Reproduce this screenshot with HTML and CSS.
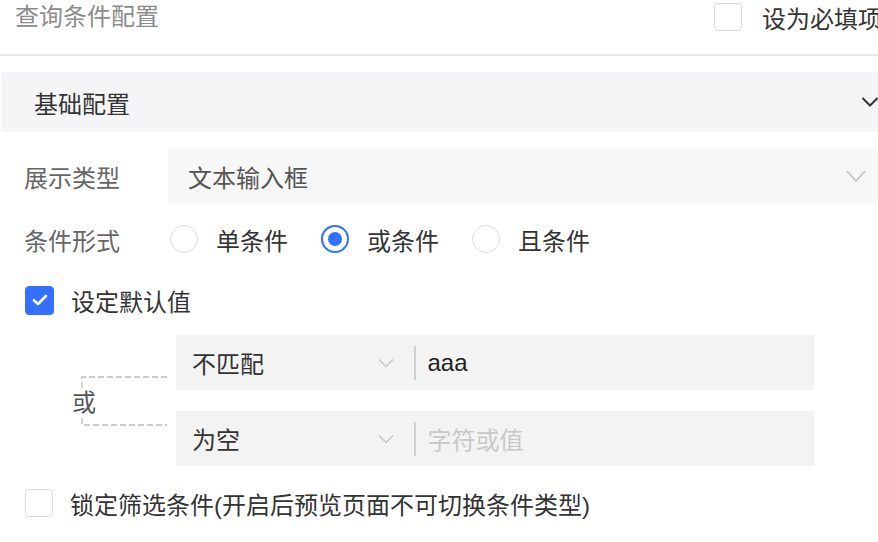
FILE: index.html
```html
<!DOCTYPE html>
<html lang="zh">
<head>
<meta charset="utf-8">
<link rel="stylesheet" href="styles.css">
</head>
<body>
<div class="page">
  <div class="top">
    <div class="top-title">查询条件配置</div>
    <label class="top-check"><span class="box"></span><span class="top-check-text">设为必填项</span></label>
  </div>

  <div class="section-head">
    <span>基础配置</span>
    <svg class="section-chev" width="18" height="12" viewBox="0 0 18 12"><path d="M1.5 2 L9 9.5 L16.5 2" fill="none" stroke="#333" stroke-width="2"/></svg>
  </div>

  <div class="row">
    <div class="label">展示类型</div>
    <div class="select">
      <span>文本输入框</span>
      <svg width="20" height="14" viewBox="0 0 20 14"><path d="M1 2 L10 12 L19 2" fill="none" stroke="#bdbdbd" stroke-width="1.5"/></svg>
    </div>
  </div>

  <div class="row radio-row">
    <div class="label">条件形式</div>
    <div class="radios">
      <label class="radio"><span class="circle"></span>单条件</label>
      <label class="radio on"><span class="circle"></span>或条件</label>
      <label class="radio"><span class="circle"></span>且条件</label>
    </div>
  </div>

  <label class="check-row">
    <span class="box checked"><svg width="16" height="12" viewBox="0 0 16 12"><path d="M2 6.2 L6 10 L14 2" fill="none" stroke="#fff" stroke-width="2.6" stroke-linecap="round" stroke-linejoin="round"/></svg></span>
    <span>设定默认值</span>
  </label>

  <div class="group">
    <div class="bracket-col">
      <div class="bracket">
        <svg width="86" height="50" viewBox="0 0 86 50"><path d="M86 1 H1 V49 H86" fill="none" stroke="#bdbdbd" stroke-width="1.3" stroke-dasharray="6 3"/></svg>
        <span class="or">或</span>
      </div>
    </div>
    <div class="cond-rows">
      <div class="cond">
        <div class="cond-op"><span>不匹配</span><svg width="16" height="10" viewBox="0 0 16 10"><path d="M1 1.5 L8 8.5 L15 1.5" fill="none" stroke="#c4c4c4" stroke-width="1.3"/></svg></div>
        <div class="cond-sep"></div>
        <div class="cond-val">aaa</div>
      </div>
      <div class="cond">
        <div class="cond-op"><span>为空</span><svg width="16" height="10" viewBox="0 0 16 10"><path d="M1 1.5 L8 8.5 L15 1.5" fill="none" stroke="#c4c4c4" stroke-width="1.3"/></svg></div>
        <div class="cond-sep"></div>
        <div class="cond-val placeholder">字符或值</div>
      </div>
    </div>
  </div>

  <label class="check-row last">
    <span class="box"></span>
    <span>锁定筛选条件(开启后预览页面不可切换条件类型)</span>
  </label>
</div>
</body>
</html>
```

FILE: styles.css
```css
* { box-sizing: border-box; }
html, body { margin: 0; padding: 0; background: #fff; }
body {
  font-family: "Liberation Sans", "Noto Sans CJK SC", sans-serif;
  font-size: 24px;
  color: #333;
  overflow: hidden;
  width: 878px;
  height: 542px;
}
.page { width: 878px; }

.top {
  display: flex;
  align-items: center;
  height: 56px;
  padding-bottom: 20px;
  border-bottom: 2px solid #e9e9e9;
  white-space: nowrap;
  overflow: hidden;
}
.top-title { padding-left: 15px; color: #8c8c8c; line-height: 34px; width: 714px; flex: none; }
.top-check { display: flex; align-items: center; gap: 20px; flex: none; }
.top-check-text { color: #333; }

.box {
  width: 28px;
  height: 28px;
  border: 1.5px solid #dcdcdc;
  border-radius: 4px;
  background: #fff;
  display: inline-flex;
  align-items: center;
  justify-content: center;
  flex: none;
}
.box.checked { background: #3370ff; border-color: #3370ff; width: 29px; height: 29px; }

.section-head {
  margin: 16px 0 0 2px;
  height: 60px;
  background: #f5f5f7;
  display: flex;
  align-items: center;
  justify-content: space-between;
  padding-left: 32px;
  padding-right: 0;
  color: #333;
}
.section-chev { margin-right: -1px; }

.row {
  display: flex;
  align-items: center;
  margin-top: 16px;
  height: 56px;
}
.label { width: 168px; padding-left: 24px; color: #666; flex: none; }
.select {
  flex: 1;
  height: 56px;
  background: #f7f7f7;
  border-radius: 4px 0 0 4px;
  display: flex;
  align-items: center;
  justify-content: space-between;
  padding-left: 20px;
  padding-right: 12px;
  color: #555;
}

.radio-row { margin-top: 7px; }
.radios { display: flex; align-items: center; padding-left: 2px; }
.radio { display: flex; align-items: center; gap: 18px; margin-right: 33px; color: #333; }
.circle {
  width: 28px;
  height: 28px;
  border-radius: 50%;
  border: 1.5px solid #dcdcdc;
  display: inline-flex;
  align-items: center;
  justify-content: center;
}
.radio.on .circle { border: 2px solid #3370ff; }
.radio.on .circle::after {
  content: "";
  width: 14px;
  height: 14px;
  border-radius: 50%;
  background: #3370ff;
}

.check-row {
  display: flex;
  align-items: center;
  gap: 17px;
  padding-left: 25px;
  height: 30px;
  margin-top: 18px;
  color: #333;
}
.check-row.last { margin-top: 22px; }

.group { display: flex; margin-top: 20px; }
.bracket-col {
  width: 176px;
  flex: none;
  display: flex;
  align-items: center;
}
.bracket { position: relative; margin-left: 81px; margin-top: 1px; height: 50px; }
.bracket svg { display: block; }
.or {
  position: absolute;
  left: -9px;
  top: 15px;
  line-height: 24px;
  background: #fff;
  color: #555;
}
.cond-rows { width: 638px; display: flex; flex-direction: column; gap: 21px; }
.cond {
  height: 55px;
  background: #f3f3f3;
  display: flex;
  align-items: center;
}
.cond-op {
  width: 238px;
  padding-left: 16px;
  padding-right: 20px;
  display: flex;
  align-items: center;
  justify-content: space-between;
  color: #333;
}
.cond-sep { width: 1.5px; height: 34px; background: #cfcfcf; }
.cond-val { padding-left: 12px; color: #222; }
.cond-val.placeholder { color: #c8c8c8; }
```
